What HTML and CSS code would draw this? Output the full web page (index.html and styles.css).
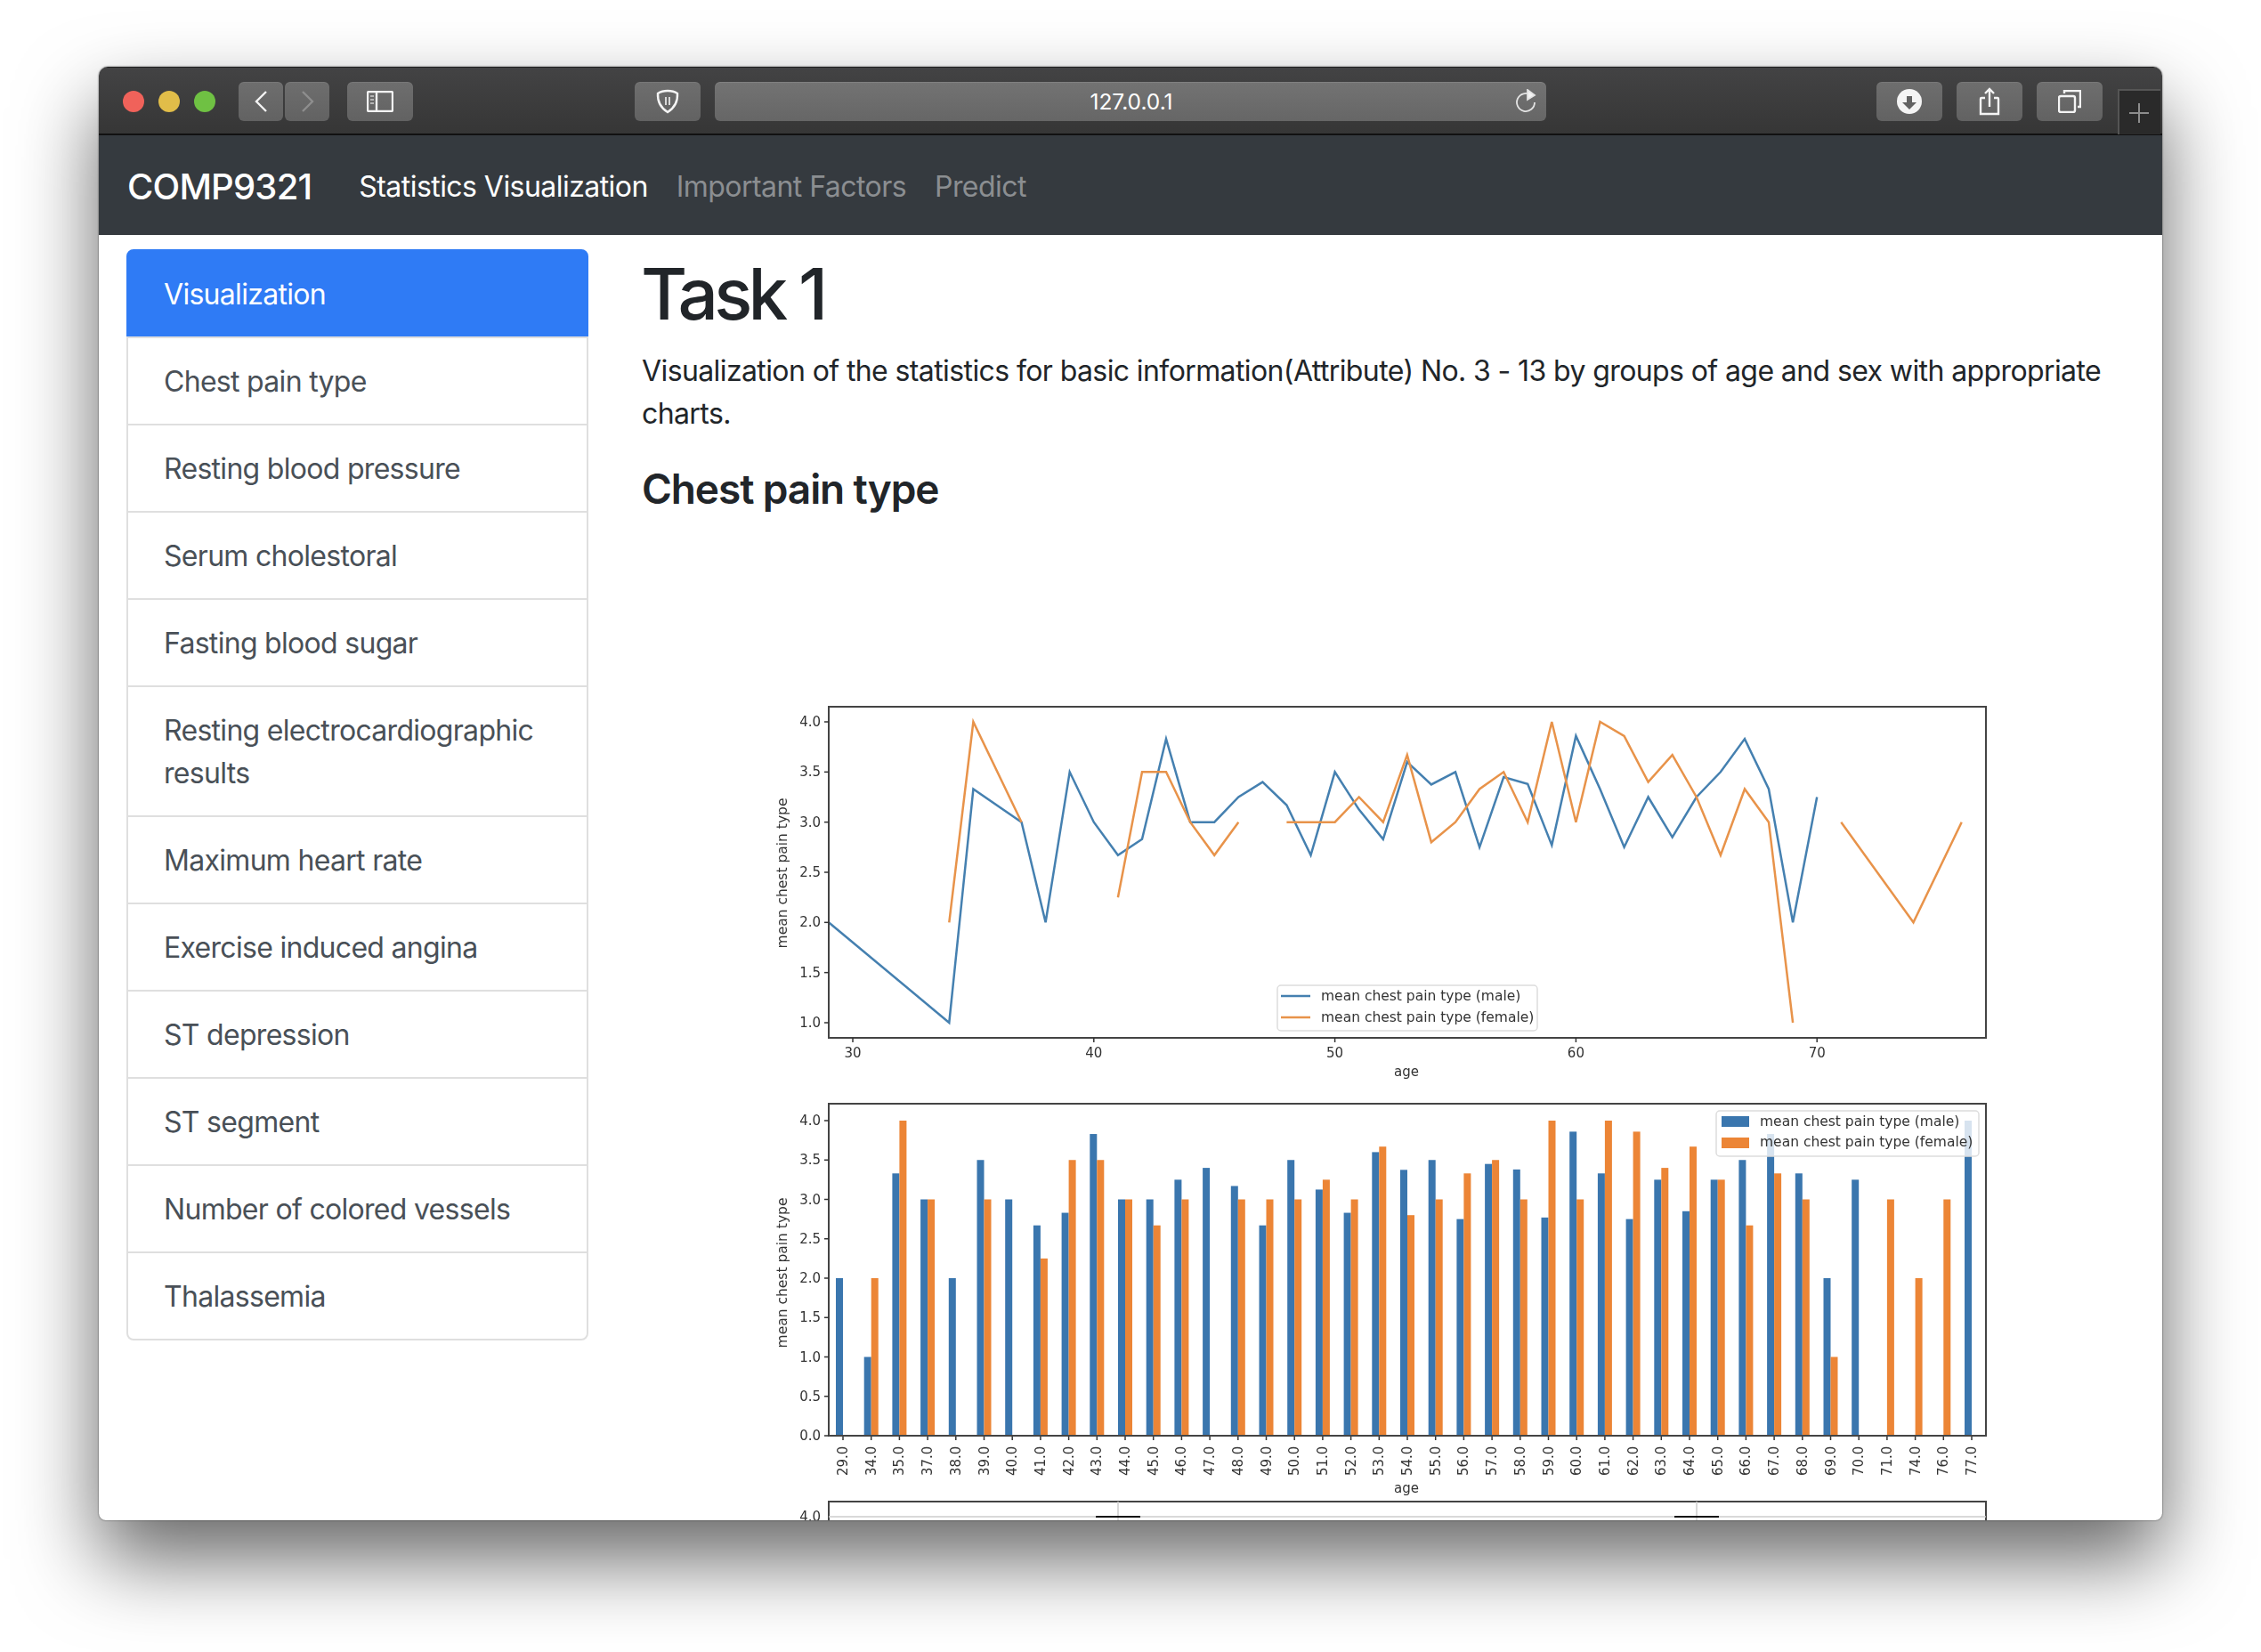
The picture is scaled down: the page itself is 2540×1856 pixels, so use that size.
FILE: index.html

```html
<!DOCTYPE html>
<html lang="en">
<head>
<meta charset="UTF-8" />
<title>COMP9321</title>
<link rel="stylesheet" href="styles.css">
</head>
<body>
<div class="window">
  <!-- Safari toolbar -->
  <div class="toolbar">
    <span class="light red"></span>
    <span class="light yellow"></span>
    <span class="light green"></span>
    <div class="nav-btns">
      <span class="tool-btn btn-half">
        <svg width="15" height="24" viewBox="0 0 15 24"><path d="M13 1 2 12l11 11" /></svg>
      </span>
      <span class="tool-btn btn-half dim">
        <svg width="15" height="24" viewBox="0 0 15 24"><path d="M2 1l11 11L2 23" /></svg>
      </span>
    </div>
    <span class="tool-btn sidebar-btn">
      <svg width="30" height="24" viewBox="0 0 30 24"><rect x="1" y="1" width="28" height="22" rx="1.500" /><path d="M11 1v22" /><path class="dots" d="M4 6h4M4 10h4M4 14h4" /></svg>
    </span>
    <span class="tool-btn shield-btn">
      <svg width="28" height="28" viewBox="0 0 28 28"><path d="M14 2c4 0 8 1 11 3 .5 9-3 16-11 21C6 21 2.500 14 3 5c3-2 7-3 11-3z" /><path class="thin" d="M12 9v9M16 9v9" /></svg>
    </span>
    <div class="url-bar">
      <span class="url-text">127.0.0.1</span>
      <svg class="reload" width="24" height="28" viewBox="0 0 24 28"><path d="M17 7a10 10 0 1 0 4 8" /><path class="solid" d="M13 1l8 6-8 5z" /></svg>
    </div>
    <span class="tool-btn dl-btn">
      <svg width="28" height="28" viewBox="0 0 28 28"><circle class="solid" cx="14" cy="14" r="14" /><path class="cut" d="M11 8h6v7h5l-8 8-8-8h5z" /></svg>
    </span>
    <span class="tool-btn">
      <svg width="24" height="32" viewBox="0 0 24 32"><path d="M7 12H3a1 1 0 0 0-1 1v17h20V13a1 1 0 0 0-1-1h-4M12 22V2M7 7l5-5 5 5" /></svg>
    </span>
    <span class="tool-btn">
      <svg width="26" height="26" viewBox="0 0 26 26"><rect x="1" y="7" width="18" height="18" rx="2" /><path d="M7 4V1h18v18h-3" /></svg>
    </span>
    <div class="new-tab">
      <svg width="22" height="22" viewBox="0 0 22 22"><path d="M11 0v22M0 11h22" /></svg>
    </div>
  </div>

  <nav class="navbar">
    <a class="brand">COMP9321</a>
    <a class="nav-link active">Statistics Visualization</a>
    <a class="nav-link">Important Factors</a>
    <a class="nav-link">Predict</a>
  </nav>

  <div class="page">
    <div class="list-group">
      <a class="list-item selected">Visualization</a>
      <a class="list-item">Chest pain type</a>
      <a class="list-item">Resting blood pressure</a>
      <a class="list-item">Serum cholestoral</a>
      <a class="list-item">Fasting blood sugar</a>
      <a class="list-item">Resting electrocardiographic results</a>
      <a class="list-item">Maximum heart rate</a>
      <a class="list-item">Exercise induced angina</a>
      <a class="list-item">ST depression</a>
      <a class="list-item">ST segment</a>
      <a class="list-item">Number of colored vessels</a>
      <a class="list-item">Thalassemia</a>
    </div>
    <main class="content">
      <h1>Task 1</h1>
      <p>Visualization of the statistics for basic information(Attribute) No. 3 - 13 by groups of age and sex with appropriate charts.</p>
      <h3>Chest pain type</h3>
      <svg id="charts" class="charts" width="1400" height="938" viewBox="850 770 1400 938"></svg>
    </main>
  </div>
</div>
<script src="charts.js"></script>
</body>
</html>
```

FILE: styles.css

```css
* {
  box-sizing: border-box;
}
html, body {
  height: 100%;
}
body {
  margin: 0;
  padding: 75px 111px 0;
  overflow: hidden;
  background: #fff;
  font-family: Inter, "Liberation Sans", sans-serif;
  color: #212529;
}
.window {
  width: 2318px;
  height: 1633px;
  border-radius: 10px 10px 8px 8px;
  overflow: hidden;
  background: #fff;
  box-shadow: 0 44px 90px rgb(0 0 0 / 0.6), 0 0 2px rgb(0 0 0 / 0.7);
}

/* toolbar */
.toolbar {
  height: 77px;
  display: flex;
  align-items: flex-start;
  padding: 16px 2px 0 27px;
  background: linear-gradient(#434344, #363636);
  border-top: 1px solid #222;
  border-bottom: 2px solid #111;
}
.light {
  width: 24px;
  height: 24px;
  margin: 10px 16px 0 0;
  border-radius: 50%;
}
.red { background: #f0625a; }
.yellow { background: #e1bd49; }
.green { background: #6fc143; }
.nav-btns {
  display: flex;
  gap: 2px;
  margin: 0 20px 0 10px;
}
.tool-btn {
  width: 74px;
  height: 44px;
  margin-left: 16px;
  flex: none;
  display: flex;
  align-items: center;
  justify-content: center;
  border-radius: 6px;
  background: linear-gradient(#6e6e6e, #626262);
  box-shadow: inset 0 1px 0 rgb(255 255 255 / 0.07);
}
.nav-btns .tool-btn {
  margin-left: 0;
}
.tool-btn.btn-half {
  width: 50px;
}
.sidebar-btn {
  margin-left: 0;
}
.shield-btn {
  margin-left: 249px;
}
svg path, svg rect {
  fill: none;
}
.toolbar svg path, .toolbar svg rect {
  stroke: #f4f4f4;
  stroke-width: 2.4;
}
.toolbar svg .thin {
  stroke-width: 1.6;
}
.toolbar svg .dots {
  stroke: #b5b5b5;
  stroke-width: 2;
}
.dim svg path {
  stroke: #8e8e8e !important;
}
.toolbar svg .solid {
  fill: #f4f4f4;
  stroke: none;
}
.toolbar svg .cut {
  fill: #626262;
  stroke: none;
}
.url-bar {
  width: 934px;
  height: 44px;
  margin: 0 355px 0 16px;
  padding-left: 2px;
  flex: none;
  position: relative;
  display: flex;
  align-items: center;
  justify-content: center;
  border-radius: 6px;
  background: linear-gradient(#737373, #666);
  box-shadow: inset 0 1px 0 rgb(255 255 255 / 0.1);
  color: #fff;
  font-size: 24.5px;
}
.reload {
  position: absolute;
  right: 10px;
  top: 8px;
}
.toolbar .reload path {
  stroke: #e4e4e4;
  stroke-width: 1.8;
}
.dl-btn {
  margin-left: 16px;
}
.new-tab {
  width: 48px;
  height: 51px;
  margin: 8px 0 0 17px;
  padding-right: 2px;
  flex: none;
  display: flex;
  align-items: center;
  justify-content: center;
  background: #2a2a2a;
  border: solid #555;
  border-width: 2px 0 0 2px;
}
.toolbar .new-tab svg path {
  stroke: #8d8d8d;
  stroke-width: 2;
}

/* navbar */
.navbar {
  height: 112px;
  display: flex;
  align-items: center;
  padding: 2px 32px 0;
  background: #353a3f;
}
.brand {
  margin-right: 53px;
  font-size: 40px;
  letter-spacing: -0.8px;
  color: #fff;
  font-weight: 500;
}
.nav-link {
  margin-right: 32px;
  font-size: 32px;
  letter-spacing: -0.55px;
  color: #8b8e91;
}
.nav-link.active {
  color: #fff;
}

/* page */
.page {
  display: flex;
  align-items: flex-start;
  padding: 16px 31px 0;
}
.list-group {
  width: 519px;
  flex: none;
  margin-right: 60px;
}
.list-item {
  display: block;
  margin-bottom: -2px;
  padding: 25px 40px 23px;
  border: 2px solid #dfdfdf;
  font-size: 32px;
  line-height: 48px;
  letter-spacing: -0.7px;
  color: #495057;
}
.list-item:first-child {
  border-radius: 8px 8px 0 0;
}
.list-item:last-child {
  border-radius: 0 0 8px 8px;
  margin-bottom: 0;
}
.list-item.selected {
  background: #2f7bf5;
  border-color: #2f7bf5;
  color: #fff;
}
.content {
  flex: 1;
  min-width: 0;
}
.content h1 {
  margin: 2px 0 15px -1px;
  font-size: 80px;
  line-height: 96px;
  letter-spacing: -4.8px;
  font-weight: 500;
}
.content p {
  margin: 0 0 30px;
  font-size: 32px;
  line-height: 48px;
  letter-spacing: -0.6px;
}
.content h3 {
  margin: 0;
  font-size: 46px;
  line-height: 60px;
  letter-spacing: -1.1px;
  font-weight: 600;
}
.charts {
  display: block;
  margin: 191px 0 0 129px;
  filter: blur(0.5px);
}

/* chart parts */
.charts text {
  font-family: "DejaVu Sans", sans-serif;
  font-size: 15px;
  fill: #333;
}
.charts .label {
  font-size: 15.5px;
}
.axes {
  fill: none;
  stroke: #444;
  stroke-width: 2;
}
.tick {
  stroke: #333;
  stroke-width: 1.5;
}
.line-male, .line-female {
  fill: none;
  stroke-width: 2.5;
  stroke-linejoin: miter;
}
.line-male { stroke: #4580b0; }
.line-female { stroke: #e8934a; }
.bar-male { fill: #3a76ae; }
.bar-female { fill: #ec8536; }
.legend {
  fill: rgb(255 255 255 / 0.8);
  stroke: #ddd;
  stroke-width: 1.5;
}
.grid {
  stroke: #ccc;
  stroke-width: 1.5;
}
.cap {
  stroke: #111;
  stroke-width: 2;
}
```

FILE: charts.js

```js
// age, mean chest pain type (male), mean chest pain type (female)
const data = [
  [29, 2, null], [34, 1, 2], [35, 3.33, 4], [37, 3, 3], [38, 2, null],
  [39, 3.5, 3], [40, 3, null], [41, 2.67, 2.25], [42, 2.83, 3.5], [43, 3.83, 3.5],
  [44, 3, 3], [45, 3, 2.67], [46, 3.25, 3], [47, 3.4, null], [48, 3.17, 3],
  [49, 2.67, 3], [50, 3.5, 3], [51, 3.125, 3.25], [52, 2.83, 3], [53, 3.6, 3.67],
  [54, 3.375, 2.8], [55, 3.5, 3], [56, 2.75, 3.33], [57, 3.45, 3.5], [58, 3.38, 3],
  [59, 2.77, 4], [60, 3.86, 3], [61, 3.33, 4], [62, 2.75, 3.86], [63, 3.25, 3.4],
  [64, 2.85, 3.67], [65, 3.25, 3.25], [66, 3.5, 2.67], [67, 3.83, 3.33], [68, 3.33, 3],
  [69, 2, 1], [70, 3.25, null], [71, null, 3], [74, null, 2], [76, null, 3], [77, 4, null]
];

const svg = document.getElementById('charts');
const LEFT = 931;
const RIGHT = 2231;
const MALE_LABEL = 'mean chest pain type (male)';
const FEMALE_LABEL = 'mean chest pain type (female)';

function add(tag, attrs, text) {
  const el = document.createElementNS('http://www.w3.org/2000/svg', tag);
  for (const key in attrs) el.setAttribute(key, attrs[key]);
  if (text) el.textContent = text;
  svg.appendChild(el);
}

function yLabel(y) {
  add('text', {
    class: 'label',
    transform: `translate(884 ${y}) rotate(-90)`,
    'text-anchor': 'middle'
  }, 'mean chest pain type');
}

function yTicks(values, toY) {
  values.forEach((v) => {
    const y = toY(v);
    add('line', { class: 'tick', x1: LEFT - 5, x2: LEFT, y1: y, y2: y });
    add('text', { x: LEFT - 9, y: y + 5, 'text-anchor': 'end' }, v.toFixed(1));
  });
}

// line chart: a missing value breaks the line
function lineChart() {
  const toX = (age) => 958 + (age - 30) * 27.08;
  const toY = (v) => 1149 - (v - 1) * 112.67;

  [[1, 'line-male'], [2, 'line-female']].forEach(([col, cls]) => {
    let run = [];
    const flush = () => {
      if (run.length > 1) add('polyline', { class: cls, points: run.join(' ') });
      run = [];
    };
    data.forEach((row) => {
      if (row[col] === null) flush();
      else run.push(`${toX(row[0]).toFixed(1)},${toY(row[col]).toFixed(1)}`);
    });
    flush();
  });

  add('rect', { class: 'axes', x: LEFT, y: 794, width: RIGHT - LEFT, height: 372 });
  [30, 40, 50, 60, 70].forEach((age) => {
    add('line', { class: 'tick', x1: toX(age), x2: toX(age), y1: 1166, y2: 1171 });
    add('text', { x: toX(age), y: 1188, 'text-anchor': 'middle' }, String(age));
  });
  yTicks([1, 1.5, 2, 2.5, 3, 3.5, 4], toY);
  yLabel(981);
  add('text', { x: 1580, y: 1209, 'text-anchor': 'middle' }, 'age');

  add('rect', { class: 'legend', x: 1435, y: 1107, width: 292, height: 51, rx: 4 });
  add('line', { class: 'line-male', x1: 1439, x2: 1472, y1: 1119, y2: 1119 });
  add('line', { class: 'line-female', x1: 1439, x2: 1472, y1: 1143, y2: 1143 });
  add('text', { class: 'label', x: 1484, y: 1124 }, MALE_LABEL);
  add('text', { class: 'label', x: 1484, y: 1148 }, FEMALE_LABEL);
}

function barChart() {
  const toY = (v) => 1613 - v * 88.5;

  data.forEach((row, i) => {
    const x = 947 + i * 31.7;
    if (row[1] !== null) add('rect', { class: 'bar-male', x: x - 8, y: toY(row[1]), width: 8, height: row[1] * 88.5 });
    if (row[2] !== null) add('rect', { class: 'bar-female', x: x, y: toY(row[2]), width: 8, height: row[2] * 88.5 });
    add('line', { class: 'tick', x1: x, x2: x, y1: 1613, y2: 1618 });
    add('text', {
      transform: `translate(${x + 5} 1658) rotate(-90)`,
    }, row[0].toFixed(1));
  });

  add('rect', { class: 'axes', x: LEFT, y: 1240, width: RIGHT - LEFT, height: 373 });
  yTicks([0, 0.5, 1, 1.5, 2, 2.5, 3, 3.5, 4], toY);
  yLabel(1430);
  add('text', { x: 1580, y: 1677, 'text-anchor': 'middle' }, 'age');

  add('rect', { class: 'legend', x: 1928, y: 1248, width: 295, height: 51, rx: 4 });
  add('rect', { class: 'bar-male', x: 1934, y: 1254, width: 31, height: 12 });
  add('rect', { class: 'bar-female', x: 1934, y: 1278, width: 31, height: 12 });
  add('text', { class: 'label', x: 1977, y: 1265 }, MALE_LABEL);
  add('text', { class: 'label', x: 1977, y: 1288 }, FEMALE_LABEL);
}

// only the top of the third chart is on screen
function boxChart() {
  add('rect', { class: 'axes', x: LEFT, y: 1687, width: RIGHT - LEFT, height: 60 });
  add('line', { class: 'grid', x1: LEFT, x2: RIGHT, y1: 1704, y2: 1704 });
  [1256, 1906].forEach((x) => {
    add('line', { class: 'grid', x1: x, x2: x, y1: 1687, y2: 1740 });
    add('line', { class: 'cap', x1: x - 25, x2: x + 25, y1: 1704, y2: 1704 });
  });
  add('text', { x: LEFT - 9, y: 1709, 'text-anchor': 'end' }, '4.0');
}

lineChart();
barChart();
boxChart();
```
